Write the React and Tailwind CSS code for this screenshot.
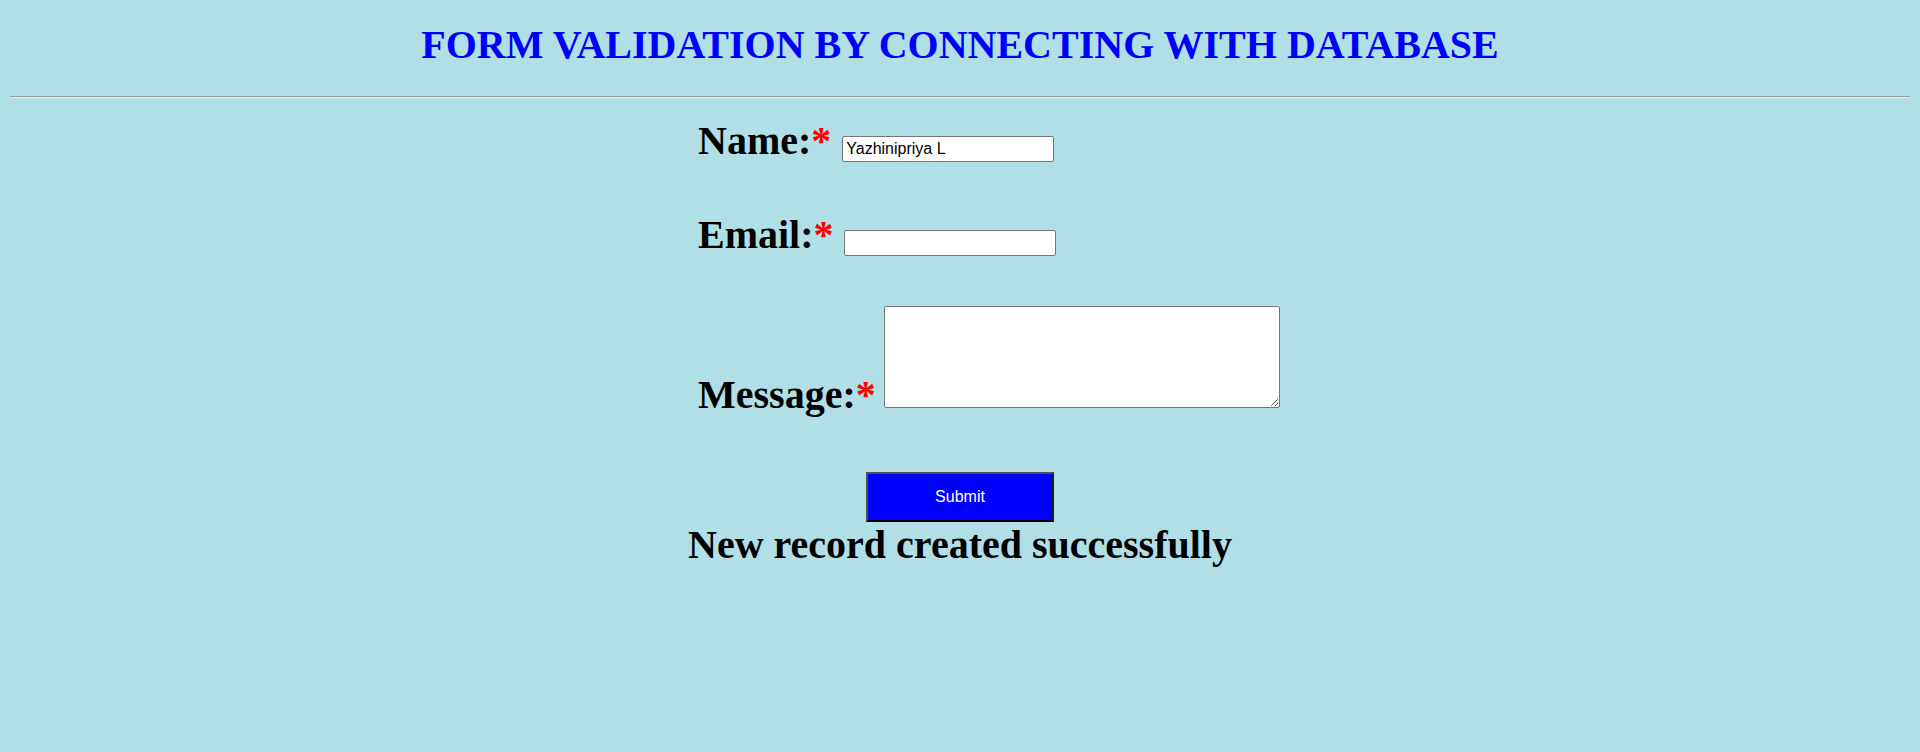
export default function App() {
  return (
    <div className="min-h-[752px] bg-[#B0E0E6] pt-[23px] font-['Liberation_Serif',serif] text-black">
      <h1 className="text-center text-[40px] leading-[44px] font-bold text-[#0000ff]">
        FORM VALIDATION BY CONNECTING WITH DATABASE
      </h1>
      <div className="mx-[10px] mt-[29px] border-t border-b border-t-[#9a9a9a] border-b-[#eeeeee]" />

      <form className="w-[524px] mx-auto whitespace-nowrap" onSubmit={(e) => e.preventDefault()}>
        <div className="mt-[20px] text-[40px] leading-[46px] font-bold">
          <span>Name:</span>
          <span className="text-[#ff0000]">*</span>{" "}
          <input
            type="text"
            defaultValue="Yazhinipriya L"
            className="w-[212px] h-[26px] ml-[1px] px-[3px] bg-white border border-[#767676] rounded-[2px] font-['Liberation_Sans',Arial,sans-serif] text-[16px] leading-[normal] font-normal text-black align-baseline"
          />
        </div>
        <div className="mt-[48px] text-[40px] leading-[46px] font-bold">
          <span>Email:</span>
          <span className="text-[#ff0000]">*</span>{" "}
          <input
            type="text"
            className="w-[212px] h-[26px] px-[3px] bg-white border border-[#767676] rounded-[2px] font-['Liberation_Sans',Arial,sans-serif] text-[16px] leading-[normal] font-normal text-black align-baseline"
          />
        </div>
        <div className="mt-[48px] text-[40px] leading-[46px] font-bold">
          <span>Message:</span>
          <span className="text-[#ff0000]">*</span>{" "}
          <textarea
            className="w-[396px] h-[102px] -ml-[2px] bg-white border border-[#767676] rounded-[2px] font-['Liberation_Mono',monospace] text-[13px] leading-[normal] font-normal text-black align-baseline resize"
          />
        </div>
      </form>

      <div className="mt-[54px] flex justify-center">
        <button
          type="button"
          className="w-[188px] h-[50px] flex items-center justify-center bg-[#0000ff] text-white border-2 border-t-[#505050] border-l-[#505050] border-r-[#202020] border-b-[#000000] font-['Liberation_Sans',Arial,sans-serif] text-[16px] leading-[normal]"
        >
          Submit
        </button>
      </div>
      <div className="text-center text-[40px] leading-[46px] font-bold">
        New record created successfully
      </div>
    </div>
  );
}
